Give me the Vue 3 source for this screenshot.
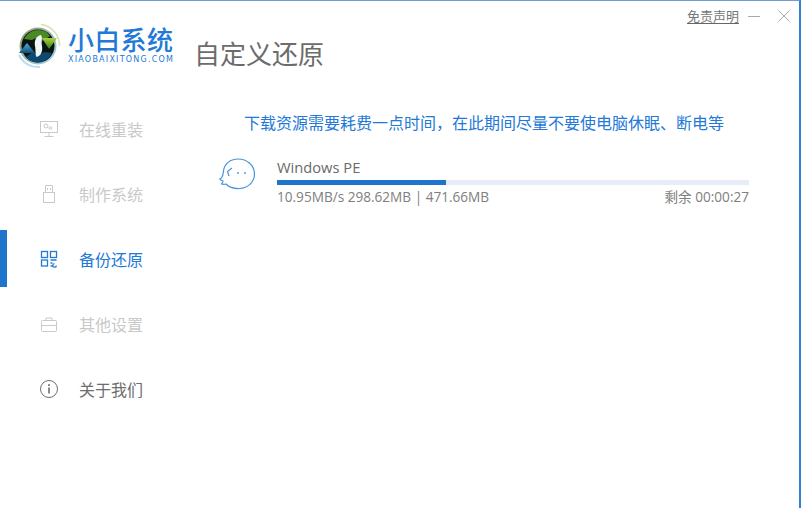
<script setup>
const items = [
  { key: 'monitor', label: '在线重装', state: 'muted' },
  { key: 'usb', label: '制作系统', state: 'muted' },
  { key: 'grid', label: '备份还原', state: 'active' },
  { key: 'case', label: '其他设置', state: 'muted' },
  { key: 'info', label: '关于我们', state: 'normal' },
]
</script>

<template>
  <div class="window">
    <header class="top">
      <div class="brand">
        <svg class="logo" viewBox="0 0 46 46" width="46" height="46">
          <defs>
            <linearGradient id="up" x1="0" y1="0" x2="0" y2="1">
              <stop offset="0" stop-color="#4fb2e4" />
              <stop offset="1" stop-color="#0d4f78" />
            </linearGradient>
            <linearGradient id="down" x1="0" y1="0" x2="0" y2="1">
              <stop offset="0" stop-color="#a8d040" />
              <stop offset="1" stop-color="#3c7f14" />
            </linearGradient>
            <linearGradient id="rim" x1="0" y1="0" x2="1" y2="1">
              <stop offset="0" stop-color="#8a9a70" />
              <stop offset="1" stop-color="#a9d4ec" />
            </linearGradient>
          </defs>
          <path d="M25 1.5A21 21 0 0 1 43.5 23" fill="none" stroke="#d4e4b0" stroke-width="1.6" />
          <path d="M3 32A21 21 0 0 0 24 44" fill="none" stroke="#b9dcf0" stroke-width="2" />
          <circle cx="22" cy="23" r="18.5" fill="url(#rim)" />
          <circle cx="22" cy="23" r="16.5" fill="#0a1512" />
          <path d="M8 16A16 16 0 0 1 31 9.5L34 13L27 18A8 8 0 0 0 16 17Z" fill="#4a8a24" />
          <path d="M26 15L41 15L33 26Z" fill="url(#down)" />
          <path d="M36 30A16 16 0 0 1 13 37L10 34L17 29A8 8 0 0 0 28 29Z" fill="#0e4a70" />
          <path d="M3 30L11 20L19 30Z" fill="url(#up)" />
          <path d="M25 12C20 13 18 18 19 23C20 28 19 31 20.5 34C24.5 33 27 29 26 23C25 18 27 15 25 12Z" fill="#f2f6f6" />
        </svg>
        <div class="brand-text">
          <div class="brand-name">小白系统</div>
          <div class="brand-url">XIAOBAIXITONG.COM</div>
        </div>
      </div>
      <h1 class="page-title">自定义还原</h1>
      <div class="controls">
        <a class="disclaimer">免责声明</a>
        <span class="minimize"></span>
        <svg class="close" viewBox="0 0 12 12" width="12" height="12">
          <path d="M0.5 0.5L11.5 11.5M11.5 0.5L0.5 11.5" stroke="#aaa" stroke-width="1" fill="none" />
        </svg>
      </div>
    </header>

    <div class="body">
      <nav class="side">
        <div v-for="item in items" :key="item.key" class="nav-item" :class="item.state">
          <svg class="nav-icon" viewBox="0 0 18 18" width="18" height="18" fill="none" stroke="currentColor" stroke-width="1">
            <template v-if="item.key === 'monitor'">
              <rect x="0.5" y="1.5" width="17" height="11" />
              <circle cx="6" cy="6" r="2" />
              <circle cx="10.5" cy="8" r="1.3" />
              <path d="M9 12.5V16M4.5 16.5H13.5" />
            </template>
            <template v-else-if="item.key === 'usb'">
              <path d="M5.5 7V0.5H12.5V7" />
              <rect x="3.5" y="7.5" width="11" height="10" />
              <path d="M7.5 3V5M10.5 3V5" />
            </template>
            <template v-else-if="item.key === 'grid'">
              <rect x="1.5" y="1.5" width="6" height="6" stroke-width="1.3" />
              <rect x="1.5" y="10" width="6" height="6" stroke-width="1.3" />
              <rect x="10.5" y="1.5" width="6" height="6" stroke-width="1.3" />
              <path d="M10.5 10H16.5M10.5 13H12.5M10.5 16H13.5M14.5 13.6A1.8 1.8 0 1 0 16.4 15.6" stroke-width="1.3" />
            </template>
            <template v-else-if="item.key === 'case'">
              <rect x="1.5" y="5.5" width="15" height="11" rx="1" />
              <path d="M6 5.5V3H12V5.5M1.5 10.5H16.5" />
            </template>
            <template v-else>
              <circle cx="9" cy="9" r="8.5" />
              <path d="M9 7.5V13.5" stroke-width="1.6" />
              <path d="M9 4.2V6" stroke-width="1.8" />
            </template>
          </svg>
          <span class="nav-label">{{ item.label }}</span>
        </div>
      </nav>

      <main class="main">
        <p class="notice">下载资源需要耗费一点时间，在此期间尽量不要使电脑休眠、断电等</p>
        <div class="task">
          <svg class="face" viewBox="0 0 36 34" width="36" height="34" fill="none" stroke="#4a94da" stroke-width="1.2">
            <path d="M6 8C9 3 14 1 19 1C28 1 35.5 7.5 35.5 16C35.5 24 29 30 20.5 30.5C15 30.8 10 29 7 26C5.5 26.5 4 26.5 2.5 26C3.5 25 4 24 4 23C2.5 22.5 1.2 22 0.8 21C2.5 20 3.8 18.5 4 16C4.2 13 4.5 10.5 6 8Z" stroke-linejoin="round" />
            <path d="M13 10L8.5 13.5L10 18" stroke-linejoin="round" />
            <circle cx="19" cy="15" r="0.9" fill="#4a94da" stroke="none" />
            <circle cx="26" cy="15" r="0.9" fill="#4a94da" stroke="none" />
          </svg>
          <div class="task-body">
            <div class="task-name">Windows PE</div>
            <div class="track"><div class="fill" :style="{ width: '35.8%' }"></div></div>
            <div class="task-meta">
              <span>10.95MB/s 298.62MB | 471.66MB</span>
              <span class="remain">剩余 00:00:27</span>
            </div>
          </div>
        </div>
      </main>
    </div>
  </div>
</template>

<style scoped>
.window {
  width: 801px;
  height: 508px;
  box-sizing: border-box;
  background: #fff;
  border-top: 1px solid #6f9bd6;
  border-right: 2px solid #2f7fd6;
  padding-right: 1px;
  overflow: hidden;
  font-family: "Noto Sans CJK SC", "Open Sans", sans-serif;
  display: flex;
  flex-direction: column;
}
.top {
  height: 95px;
  flex: none;
  display: flex;
  align-items: flex-start;
  position: relative;
}
.brand {
  display: flex;
  align-items: flex-start;
  margin: 22px 0 0 16px;
  width: 178px;
}
.logo { flex: none; }
.brand-text {
  margin-left: 6px;
  margin-top: 3px;
}
.brand-name {
  font-size: 26px;
  line-height: 26px;
  font-weight: 500;
  letter-spacing: 0.3px;
  color: #2379d6;
}
.brand-url {
  font-family: "DejaVu Sans", sans-serif;
  font-size: 8px;
  line-height: 9px;
  margin-top: 3px;
  letter-spacing: 1.23px;
  color: #2379d6;
  white-space: nowrap;
}
.page-title {
  margin: 35px 0 0 0;
  font-size: 26px;
  line-height: 34px;
  font-weight: 400;
  color: #6c6c6c;
}
.controls {
  position: absolute;
  top: 7px;
  right: 8px;
  display: flex;
  align-items: center;
}
.disclaimer {
  font-size: 13px;
  line-height: 15px;
  color: #777;
  border-bottom: 1px solid #666;
}
.minimize {
  width: 12px;
  height: 1px;
  background: #aaa;
  margin: 0 18px 0 9px;
}
.body {
  flex: 1;
  display: flex;
  min-height: 0;
}
.side {
  width: 195px;
  flex: none;
}
.nav-item {
  height: 65px;
  display: flex;
  align-items: center;
  padding-left: 40px;
  position: relative;
  font-size: 16px;
}
.nav-icon { flex: none; }
.nav-label { margin-left: 21px; line-height: 20px; }
.muted { color: #c9c9c9; }
.active { color: #2379d6; }
.normal { color: #6e6e6e; }
.active::before {
  content: "";
  position: absolute;
  left: 0;
  top: 4px;
  width: 7px;
  height: 57px;
  background: #1f75cc;
}
.main {
  flex: 1;
  min-width: 0;
  padding-left: 24px;
}
.notice {
  margin: 14px 0 0 25px;
  font-size: 16px;
  line-height: 24px;
  color: #2379d6;
  white-space: nowrap;
}
.task {
  display: flex;
  align-items: flex-start;
  margin-top: 23px;
}
.face { flex: none; margin-top: 1px; }
.task-body {
  width: 472px;
  margin-left: 22px;
}
.task-name {
  font-family: "Open Sans", sans-serif;
  font-size: 14.7px;
  line-height: 20px;
  color: #6a6a6a;
}
.track {
  height: 5px;
  margin-top: 3px;
  background: #e6edf9;
}
.fill {
  height: 100%;
  background: #1f75cc;
}
.task-meta {
  display: flex;
  justify-content: space-between;
  margin-top: 3px;
  font-family: "Open Sans", "Noto Sans CJK SC", sans-serif;
  font-size: 13.6px;
  line-height: 18px;
  color: #808080;
}
</style>
